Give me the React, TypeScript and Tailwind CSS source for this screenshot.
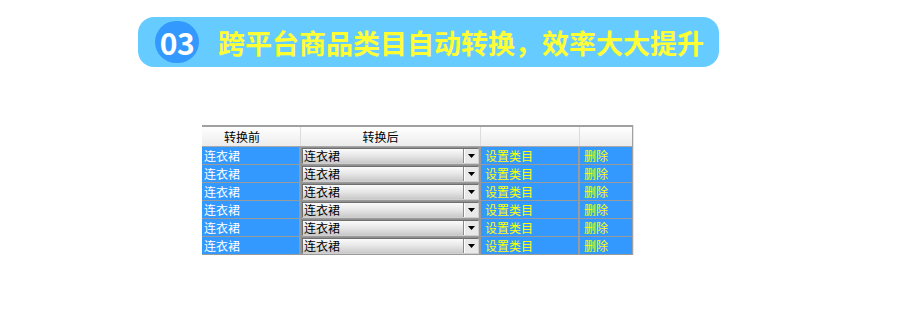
import React from "react";

const rows = [0, 1, 2, 3, 4, 5];

const cjk = { fontFamily: '"Noto Sans CJK SC", "Noto Sans", sans-serif' };

/* ---------------- BANNER ---------------- */
function Banner() {
  return (
    <div className="ml-[138px] pt-[17px]">
      <div className="flex items-center h-[50px] w-[581px] rounded-[16px] bg-[#66ccff] pl-[17px]">
        <div className="flex items-center justify-center w-[44px] h-[42px] rounded-full bg-[#3399ff] text-white text-[30px] font-bold leading-none tracking-[-0.5px]">
          03
        </div>
        <div className="ml-[19px] text-[27px] font-bold leading-none text-[#ffff33]" style={cjk}>
          跨平台商品类目自动转换，效率大大提升
        </div>
      </div>
    </div>
  );
}

/* ---------------- SELECT ---------------- */
function FakeSelect() {
  return (
    <div className="flex h-[16px] w-[178px] border border-[#6f6f6f] border-r-[#cfcfcf] border-b-[#cfcfcf] bg-gradient-to-b from-[#fbfbfb] via-[#e6e6e6] to-[#c9c9c9]">
      <div className="flex-1 pl-[1px] text-[12px] leading-[14px] text-black" style={cjk}>
        连衣裙
      </div>
      <div className="w-px bg-[#8a8a8a]" />
      <div className="flex items-center justify-center w-[14px] bg-[#e9e9e9] border-l border-white">
        <svg width="7" height="4" viewBox="0 0 7 4">
          <path d="M0 0 H7 L3.5 4 Z" fill="#000" />
        </svg>
      </div>
    </div>
  );
}

/* ---------------- APP ---------------- */
export default function App() {
  return (
    <div className="w-[904px] h-[325px] bg-white" style={cjk}>
      <Banner />

      <div className="ml-[202px] mt-[58px] w-[432px] flex">
        <div className="w-[430px]">
          <div className="h-[2px] bg-[#a0a0a0]" />
          <div className="grid grid-cols-[99px_180px_99px_51px] h-[20px] bg-gradient-to-b from-white to-[#ececec] border-b border-[#a8a8a8] text-[12px] leading-[19px] text-black">
            <div className="text-center pr-[18px] border-r border-[#dcdcdc]">转换前</div>
            <div className="text-center pr-[20px] border-r border-[#dcdcdc]">转换后</div>
            <div className="border-r border-[#dcdcdc]" />
            <div />
          </div>
          {rows.map((r) => (
            <div
              key={r}
              className="grid grid-cols-[99px_180px_99px_51px] h-[18px] bg-[#3399ff] border-b border-[#9a9a9a] text-[12px] leading-[17px]"
            >
              <div className="text-white pl-[2px] border-r-2 border-[#9a9a9a]">连衣裙</div>
              <div className="flex items-center pl-[1px] border-r-2 border-[#9a9a9a] bg-[#8f8f8f]">
                <FakeSelect />
              </div>
              <div className="text-[#ffff00] pl-[4px] border-r-2 border-[#9a9a9a]">设置类目</div>
              <div className="text-[#ffff00] pl-[4px]">删除</div>
            </div>
          ))}
        </div>
        <div className="w-[2px] border-l border-[#a0a0a0] bg-[#dde8f4]" />
      </div>
    </div>
  );
}
